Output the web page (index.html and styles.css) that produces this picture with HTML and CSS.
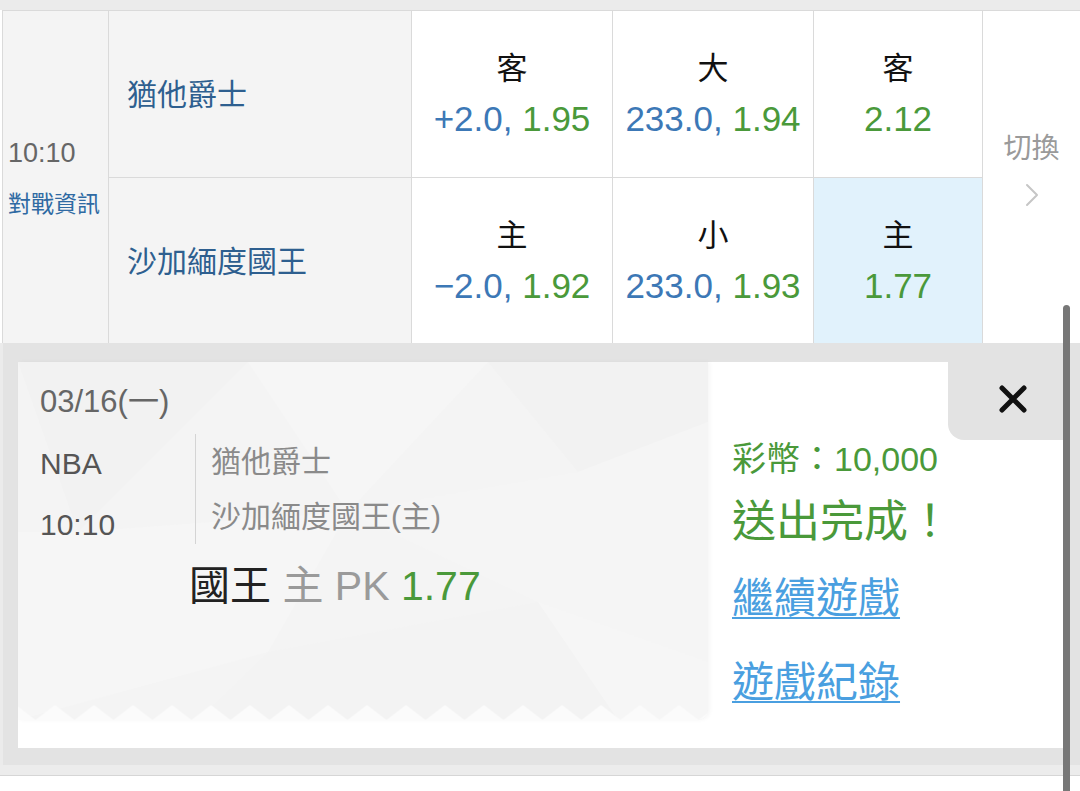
FILE: index.html
```html
<!DOCTYPE html>
<html lang="zh-Hant">
<head>
<meta charset="utf-8">
<title>投注完成</title>
<link rel="stylesheet" href="styles.css">
</head>
<body>
<div class="page">
  <div class="top-strip"></div>

  <div class="odds-table">
    <div class="cell time-cell">
      <div class="time">10:10</div>
      <div class="info-link">對戰資訊</div>
    </div>
    <div class="cell team-cell">猶他爵士</div>
    <div class="cell odd-cell">
      <div class="odd-label">客</div>
      <div class="odd-value"><span class="blue">+2.0,</span> <span class="green">1.95</span></div>
    </div>
    <div class="cell odd-cell">
      <div class="odd-label">大</div>
      <div class="odd-value"><span class="blue">233.0,</span> <span class="green">1.94</span></div>
    </div>
    <div class="cell odd-cell odd-narrow">
      <div class="odd-label">客</div>
      <div class="odd-value"><span class="green">2.12</span></div>
    </div>
    <div class="cell switch-cell">
      <div class="switch-text">切換</div>
      <svg class="chevron" width="14" height="24" viewBox="0 0 14 24"><polyline points="2,2 12,12 2,22" fill="none" stroke="#c6c6c6" stroke-width="2" stroke-linecap="round" stroke-linejoin="round"/></svg>
    </div>
    <div class="cell team-cell">沙加緬度國王</div>
    <div class="cell odd-cell">
      <div class="odd-label">主</div>
      <div class="odd-value"><span class="blue">&minus;2.0,</span> <span class="green">1.92</span></div>
    </div>
    <div class="cell odd-cell">
      <div class="odd-label">小</div>
      <div class="odd-value"><span class="blue">233.0,</span> <span class="green">1.93</span></div>
    </div>
    <div class="cell odd-cell odd-narrow selected">
      <div class="odd-label">主</div>
      <div class="odd-value"><span class="green">1.77</span></div>
    </div>
  </div>

  <div class="overlay">
    <div class="panel">
      <div class="ticket">
        <svg class="ticket-bg" width="690" height="358" viewBox="0 0 690 358" preserveAspectRatio="none">
          <rect width="690" height="358" fill="#f4f4f4"/>
          <polygon points="0,0 230,0 60,170" fill="#f2f2f2"/>
          <polygon points="230,0 470,0 330,150" fill="#f6f6f6"/>
          <polygon points="470,0 690,0 690,60 560,110" fill="#f2f2f2"/>
          <polygon points="0,170 60,170 330,150 250,290 0,358" fill="#f6f6f6"/>
          <polygon points="330,150 560,110 690,60 690,300 520,240" fill="#f5f5f5"/>
          <polygon points="250,290 520,240 600,358 180,358" fill="#f3f3f3"/>
          <polygon points="520,240 690,300 690,358 600,358" fill="#f6f6f6"/>
        </svg>
        <div class="ticket-content">
          <div class="ticket-date">03/16(一)</div>
          <div class="ticket-info">
            <div class="ticket-meta">
              <div>NBA</div>
              <div>10:10</div>
            </div>
            <div class="ticket-teams">
              <div>猶他爵士</div>
              <div>沙加緬度國王(主)</div>
            </div>
          </div>
          <div class="ticket-bet"><span class="bet-team">國王</span> <span class="bet-type">主 PK</span> <span class="green">1.77</span></div>
        </div>
        <svg class="zigzag" width="690" height="15" viewBox="0 0 690 15">
          <defs>
            <pattern id="zz" x="17.5" y="0" width="39" height="15" patternUnits="userSpaceOnUse">
              <path d="M0 15 L19.5 0 L39 15 Z" fill="#fbfbfb"/>
            </pattern>
          </defs>
          <rect width="690" height="15" fill="url(#zz)"/>
        </svg>
      </div>

      <div class="result">
        <div class="coins">彩幣：10,000</div>
        <div class="done">送出完成！</div>
        <a class="result-link first" href="#">繼續遊戲</a>
        <a class="result-link" href="#">遊戲紀錄</a>
      </div>

      <div class="close-btn" aria-label="關閉">
        <svg width="30" height="30" viewBox="0 0 30 30"><path d="M4 4 L26 26 M26 4 L4 26" stroke="#111" stroke-width="5" stroke-linecap="round"/></svg>
      </div>
    </div>
  </div>

  <div class="bottom-strip"></div>
  <div class="scrollbar"></div>
</div>
</body>
</html>
```

FILE: styles.css
```css
* {
  box-sizing: border-box;
}

html, body {
  margin: 0;
  padding: 0;
  background: #ffffff;
}

body {
  font-family: "Liberation Sans", "Noto Sans CJK TC", sans-serif;
  width: 1080px;
  height: 791px;
  overflow: hidden;
}

.page {
  position: relative;
  width: 1080px;
  height: 791px;
  background: #ffffff;
}

.top-strip {
  height: 10px;
  background: #ebebeb;
}

.odds-table {
  display: grid;
  grid-template-columns: 105px 302px 200px 200px 168px 97px;
  grid-template-rows: 166px 165px;
  gap: 1px;
  background: #dadada;
  border-top: 1px solid #dadada;
  border-left: 1px solid #dadada;
  margin-left: 2px;
}

.cell {
  background: #ffffff;
}

.time-cell {
  grid-column: 1;
  grid-row: 1 / 3;
  background: #f4f4f4;
  display: flex;
  flex-direction: column;
  justify-content: center;
  padding-left: 5px;
}

.time {
  font-size: 27px;
  line-height: 40px;
  color: #666666;
}

.info-link {
  font-size: 23px;
  line-height: 34px;
  margin-top: 14px;
  color: #2f6aa3;
  white-space: nowrap;
}

.team-cell {
  background: #f4f4f4;
  display: flex;
  align-items: center;
  padding-left: 18px;
  padding-bottom: 4px;
  font-size: 30px;
  color: #2e5f8f;
}

.odd-cell {
  display: flex;
  flex-direction: column;
  justify-content: center;
  align-items: center;
}

.odd-label {
  font-size: 31px;
  line-height: 50px;
  color: #111111;
}

.odd-value {
  font-size: 35px;
  line-height: 50px;
  white-space: nowrap;
}

.selected {
  background: #e1f2fc;
}

.blue {
  color: #3c78b6;
}

.green {
  color: #4a993a;
}

.switch-cell {
  grid-column: 6;
  grid-row: 1 / 3;
  display: flex;
  flex-direction: column;
  align-items: center;
  justify-content: center;
  padding-bottom: 16px;
}

.switch-text {
  font-size: 28px;
  line-height: 36px;
  color: #9a9a9a;
}

.chevron {
  display: block;
  margin-top: 16px;
}

.overlay {
  background: #e3e3e3;
  padding: 19px 17px 17px 18px;
  border-left: 3px solid #ebebeb;
  padding-left: 15px;
}

.panel {
  position: relative;
  height: 386px;
  background: #ffffff;
  display: grid;
  grid-template-columns: 690px 1fr;
  align-items: start;
}

.ticket {
  position: relative;
  height: 358px;
  overflow: hidden;
  border-bottom-right-radius: 10px;
  box-shadow: 2px 0 4px rgba(0, 0, 0, 0.04);
}

.ticket-bg {
  position: absolute;
  left: 0;
  top: 0;
}

.zigzag {
  position: absolute;
  left: 0;
  bottom: 0;
  display: block;
}

.ticket-content {
  position: relative;
  padding: 22px 0 0 22px;
}

.ticket-date {
  font-size: 31px;
  line-height: 36px;
  color: #666666;
}

.ticket-info {
  display: flex;
  align-items: flex-start;
  margin-top: 13px;
}

.ticket-meta {
  width: 155px;
  font-size: 30px;
  line-height: 61px;
  color: #555555;
}

.ticket-teams {
  border-left: 1px solid #d4d4d4;
  padding-left: 15px;
  margin-top: 1px;
  font-size: 30px;
  line-height: 55px;
  color: #8a8a8a;
}

.ticket-bet {
  margin-top: 6px;
  padding-left: 149px;
  font-size: 41px;
  line-height: 50px;
  white-space: nowrap;
}

.bet-team {
  color: #222222;
}

.bet-type {
  color: #9a9a9a;
}

.result {
  display: flex;
  flex-direction: column;
  align-items: flex-start;
  padding: 75px 0 0 24px;
}

.coins {
  font-size: 34px;
  line-height: 44px;
  color: #4a993a;
}

.done {
  font-size: 44px;
  line-height: 60px;
  margin-top: 11px;
  color: #4a993a;
}

.result-link {
  font-size: 42px;
  line-height: 60px;
  margin-top: 17px;
  color: #4a9fe0;
  text-decoration: underline;
  text-decoration-thickness: 2px;
  text-underline-offset: 4px;
}

.result-link + .result-link {
  margin-top: 24px;
}

.close-btn {
  position: absolute;
  top: 0;
  right: 0;
  width: 115px;
  height: 78px;
  background: #e3e3e3;
  border-bottom-left-radius: 16px;
  display: flex;
  align-items: center;
  justify-content: center;
  padding: 0 0 4px 15px;
}

.close-btn svg {
  display: block;
}

.bottom-strip {
  height: 11px;
  background: #ececec;
  border-bottom: 1px solid #d6d6d6;
}

.scrollbar {
  position: absolute;
  left: 1063px;
  top: 305px;
  bottom: 0;
  width: 7px;
  background: #777777;
  border-radius: 4px 4px 0 0;
}
```
